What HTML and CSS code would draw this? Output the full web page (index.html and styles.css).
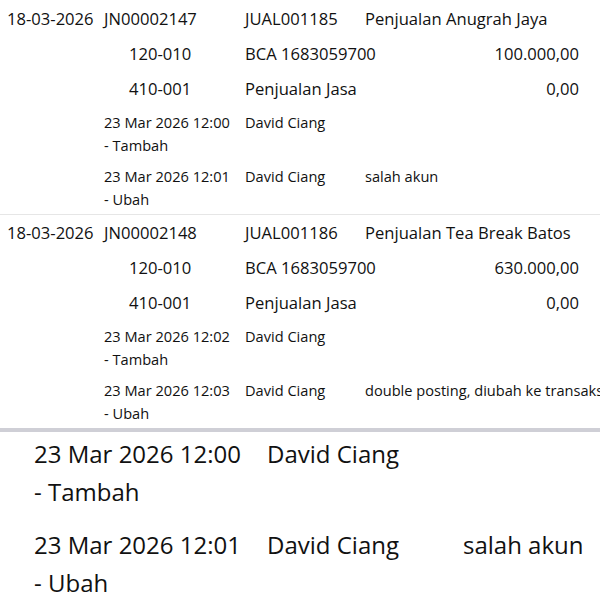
FILE: index.html
```html
<!DOCTYPE html>
<html lang="en">
<head>
    <meta charset="UTF-8">
    <meta name="viewport" content="width=device-width, initial-scale=1.0">
    <title>Jurnal - Riwayat Perubahan</title>
    <link rel="stylesheet" href="styles.css">
</head>
<body>
    <div class="jr-list">
        <!-- Jurnal 1 -->
        <div class="jr-entry">
            <div class="jr-row jr-head">
                <span>18-03-2026</span>
                <span>JN00002147</span>
                <span>JUAL001185</span>
                <span>Penjualan Anugrah Jaya</span>
            </div>
            <div class="jr-row jr-line">
                <span></span>
                <span class="jr-acc">120-010</span>
                <span>BCA 1683059700</span>
                <span class="jr-amt">100.000,00</span>
            </div>
            <div class="jr-row jr-line">
                <span></span>
                <span class="jr-acc">410-001</span>
                <span>Penjualan Jasa</span>
                <span class="jr-amt">0,00</span>
            </div>
            <div class="jr-row jr-log">
                <span></span>
                <span class="jr-when">23 Mar 2026 12:00 - Tambah</span>
                <span>David Ciang</span>
                <span class="jr-note"></span>
            </div>
            <div class="jr-row jr-log">
                <span></span>
                <span class="jr-when">23 Mar 2026 12:01 - Ubah</span>
                <span>David Ciang</span>
                <span class="jr-note">salah akun</span>
            </div>
        </div>

        <!-- Jurnal 2 -->
        <div class="jr-entry">
            <div class="jr-row jr-head">
                <span>18-03-2026</span>
                <span>JN00002148</span>
                <span>JUAL001186</span>
                <span>Penjualan Tea Break Batos</span>
            </div>
            <div class="jr-row jr-line">
                <span></span>
                <span class="jr-acc">120-010</span>
                <span>BCA 1683059700</span>
                <span class="jr-amt">630.000,00</span>
            </div>
            <div class="jr-row jr-line">
                <span></span>
                <span class="jr-acc">410-001</span>
                <span>Penjualan Jasa</span>
                <span class="jr-amt">0,00</span>
            </div>
            <div class="jr-row jr-log">
                <span></span>
                <span class="jr-when">23 Mar 2026 12:02 - Tambah</span>
                <span>David Ciang</span>
                <span class="jr-note"></span>
            </div>
            <div class="jr-row jr-log">
                <span></span>
                <span class="jr-when">23 Mar 2026 12:03 - Ubah</span>
                <span>David Ciang</span>
                <span class="jr-note jr-clip">double posting, diubah ke transaksi</span>
            </div>
        </div>
    </div>

    <!-- Perbesaran riwayat -->
    <div class="jr-zoom">
        <div class="jr-zoom-row">
            <span class="jr-when">23 Mar 2026 12:00 - Tambah</span>
            <span>David Ciang</span>
            <span class="jr-note"></span>
        </div>
        <div class="jr-zoom-row">
            <span class="jr-when">23 Mar 2026 12:01 - Ubah</span>
            <span>David Ciang</span>
            <span class="jr-note">salah akun</span>
        </div>
    </div>
</body>
</html>
```

FILE: styles.css
```css
body {
    margin: 0;
    width: 600px;
    overflow: hidden;
    font-family: "Open Sans", "Noto Sans", sans-serif;
    color: #111;
    background: #fff;
}

.jr-list {
    padding-top: 1px;
}

.jr-entry {
    border-bottom: 1px solid #e6e6e6;
}

.jr-entry:last-child {
    border-bottom: 4px solid #cfcfd6;
}

.jr-row {
    display: grid;
    grid-template-columns: 104px 141px 120px 1fr;
    padding-right: 21px;
    white-space: nowrap;
}

.jr-row > span:first-child {
    padding-left: 7px;
}

.jr-head,
.jr-line {
    height: 35px;
    align-items: center;
    font-size: 16.6px;
}

.jr-acc {
    padding-left: 25px;
}

.jr-amt {
    text-align: right;
}

.jr-log {
    font-size: 14.6px;
    line-height: 23px;
    padding-top: 5px;
    padding-bottom: 3px;
}

.jr-when {
    white-space: normal;
    padding-right: 10px;
}

.jr-note {
    white-space: nowrap;
}

.jr-clip {
    overflow: hidden;
    margin-right: -21px;
}

/* panel perbesaran */
.jr-zoom {
    padding: 3px 0 0 34px;
}

.jr-zoom-row {
    display: grid;
    grid-template-columns: 233px 196px 1fr;
    font-size: 24px;
    line-height: 38px;
    padding-bottom: 15px;
}

.jr-zoom-row .jr-when {
    padding-right: 18px;
}
```
